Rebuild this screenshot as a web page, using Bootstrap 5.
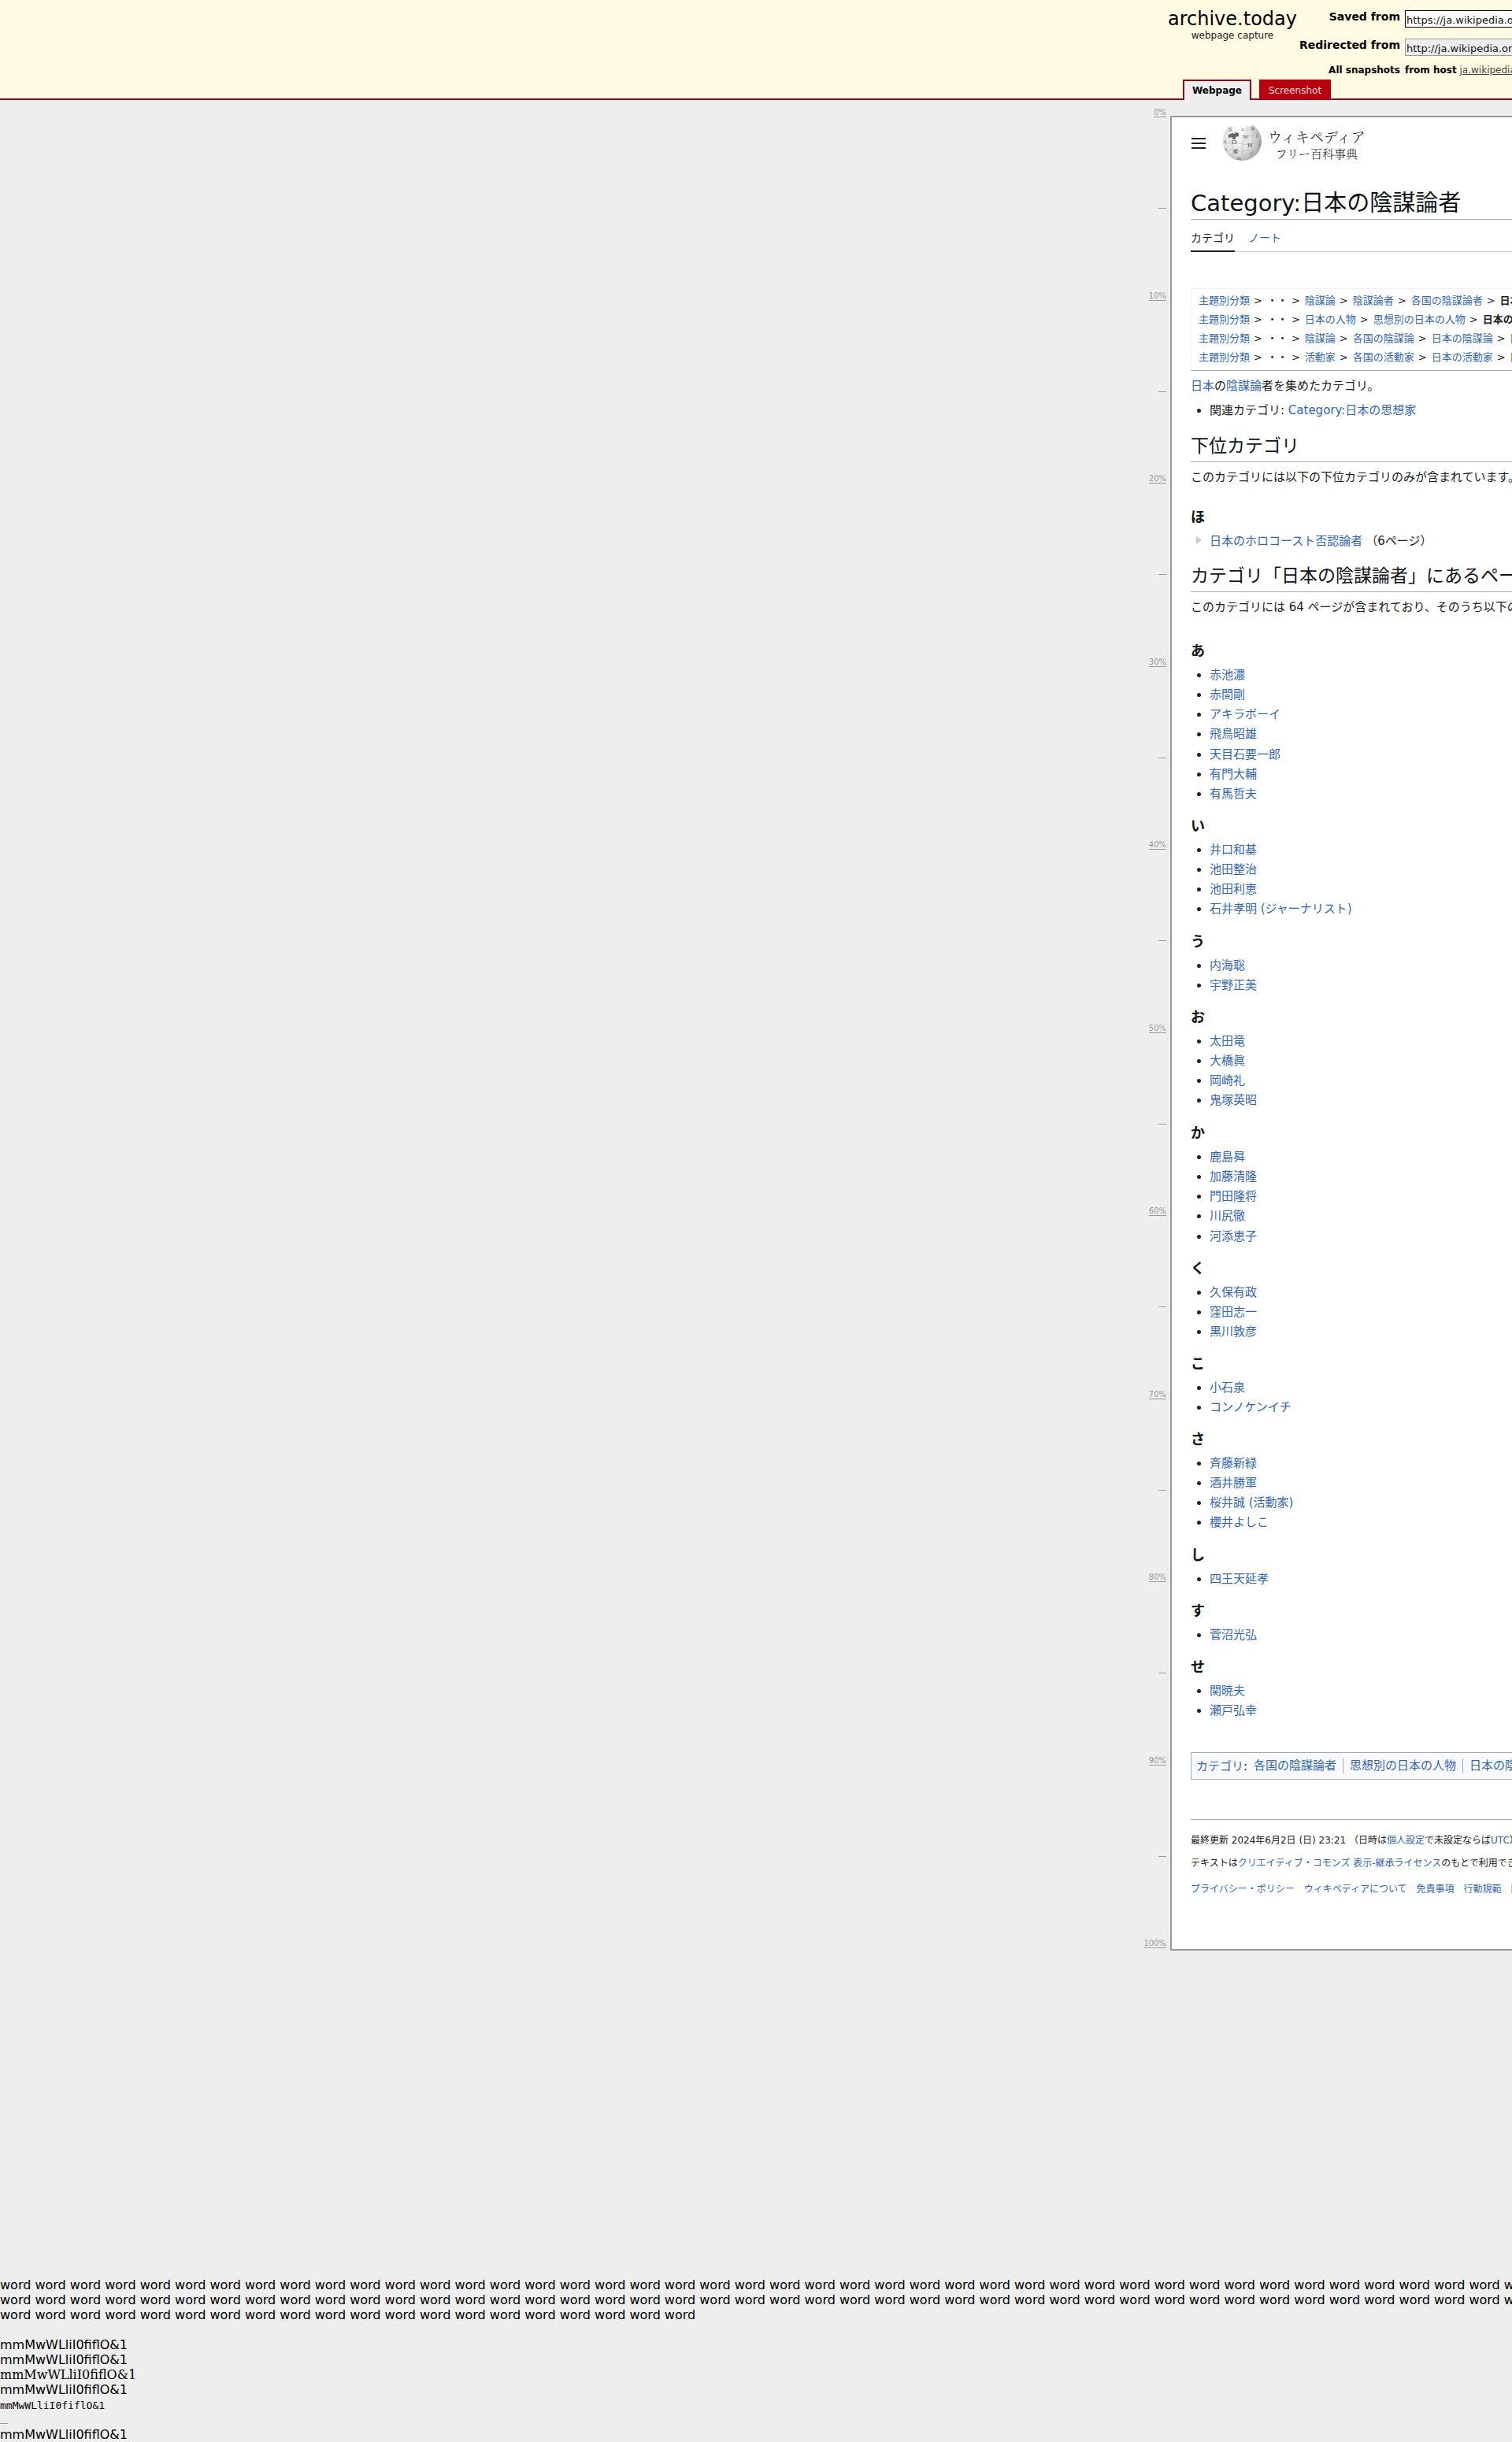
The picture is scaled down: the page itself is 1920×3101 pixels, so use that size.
<!DOCTYPE html>
<html lang="ja">
<head>
<meta charset="utf-8">
<meta name="viewport" content="width=device-width, initial-scale=1">
<title>Category:日本の陰謀論者</title>
<link href="https://cdn.jsdelivr.net/npm/bootstrap@5.3.0/dist/css/bootstrap.min.css" rel="stylesheet">
<script src="https://cdn.jsdelivr.net/npm/bootstrap@5.3.0/dist/js/bootstrap.bundle.min.js"></script>
<style>
body{background:#eee;color:#000;font:16px/19px "DejaVu Sans","Noto Sans CJK JP",sans-serif;overflow-x:hidden}
a{text-decoration:none;color:#3366b0}
.clip{overflow:hidden;white-space:nowrap}
/* archive bar */
.topbar{background:#fffae1;border-bottom:2px solid #900b1d}
.bar-inner{padding-left:calc(100% - 437px);height:101px}
.brand{flex:0 0 163px;padding-top:9px}
.brand-name{font-size:24px;line-height:30px;color:#000}
.brand-sub{font-size:12px;line-height:12px;color:#222}
.fields{padding-top:13px}
.field-row{height:36px;font-size:14px}
.field-row.short{height:32px}
.field-row.small-row{font-size:12px;line-height:16px;height:16px}
.field-label{width:131px;margin-right:6px;text-align:right;font-weight:bold;line-height:17px}
.url{width:520px;height:22px;padding:0 1px;border:1px solid #000;background:#fff;font-size:13px;line-height:20px;color:#111}
.url.muted{border-color:#999;background:#eee}
.host-link{color:#444;text-decoration:underline}
.views{margin-left:calc(100% - 418px);margin-bottom:-2px;gap:10px;font-size:12px;line-height:24px}
.view-tab{height:26px;padding:0 10px;border:2px solid #900b1d;border-bottom:0;background:#eee;color:#000;font-weight:bold}
.view-tab.other{background:#b8000f;border-color:#b8000f;color:#fdd;font-weight:normal}
/* scroll scale */
.ruler{flex:0 0 calc(100% - 439px);padding-bottom:3px;font-size:10px;line-height:10px}
.ruler-step{flex:1 1 0;display:flex;justify-content:flex-end;align-items:flex-end}
.ruler-step:first-child{flex:0 0 22px}
.ruler-step a{color:#999;border-bottom:1px solid #999}
.tick{width:10px;height:1px;background:#999}
.capture{margin:20px 0 0 5px;width:1028px;flex:none;border:2px solid #999;background:#fff;color:#202122;padding:0 24px 64px;font-size:15px;line-height:24px}
/* article */
.masthead{padding-top:8px;height:82px}
.menu-btn{border:0;background:none;padding:0;width:20px;height:50px;display:flex;align-items:center}
.logo{margin-left:20px;gap:8px;color:#111;height:50px}
.wordmark{font-family:"Noto Serif CJK JP","Noto Sans CJK JP",serif;font-weight:300;text-align:center;color:#222}
.wordmark-top{font-size:18px;line-height:24px}
.wordmark-sub{font-size:15px;line-height:19px}
.page-title{font-size:29px;line-height:39px;height:48px;margin:0;padding-top:8px;border-bottom:1px solid #a2a9b1;font-weight:normal;color:#101418}
.page-tabs{height:41px;border-bottom:1px solid #c8ccd1;font-size:14px;gap:17px;padding-top:11px}
.page-tabs a{line-height:24px;height:30px}
.page-tabs .current{color:#202122;border-bottom:2px solid #202122}
.crumbs{margin-top:46px;border:1px solid #f0f0f0;border-bottom-color:#a2a9b1;padding:3px 9px 4px;font-size:13px}
.crumbs b{font-weight:bold}
.crumbs i{font-style:normal;padding:0 6px 0 5px}
.intro{margin:7px 0}
.section-title{font-size:23px;line-height:36px;height:42px;margin:11px 0 7px;padding-top:3px;border-bottom:1px solid #a2a9b1;font-weight:normal;color:#101418}
.kana{font-size:18px;line-height:29px;margin:13px 0 4px;font-weight:bold;color:#101418}
.names{margin:0;padding-left:24px}
.names li{line-height:25px}
.names li:nth-child(4){padding-bottom:1px}
.arrow{width:7px;height:10px;margin:0 10px 2px 7px}
.groups{padding-top:11px}
.groups.pages{padding-top:16px}
.cats{margin-top:40px;height:35px;border:1px solid #a2a9b1;background:#f8f9fa;padding:0 6px}
.cats ul{margin:0 0 0 8px;padding:0;list-style:none;display:flex}
.cats li{line-height:19px;padding:0 8px;border-left:1px solid #a2a9b1}
.cats li:first-child{border:0;padding-left:0}
.foot{margin-top:50px;border-top:1px solid #a2a9b1;padding-top:14px;font-size:12px}
.foot p{margin:0 0 5px}
.foot-links{margin-top:9px;gap:12px}
/* font probes */
.probe{margin-top:415px}
.probe .serif{font-family:"DejaVu Serif",serif}
.probe .mono{font-family:"DejaVu Sans Mono",monospace;font-size:13px;height:19px;padding-top:1px}
.probe .blank-line{height:19px}
</style>
</head>
<body>
<header class="topbar">
  <div class="bar-inner d-flex clip">
    <div class="brand text-center">
      <a class="brand-name d-block" href="#">archive.today</a>
      <div class="brand-sub">webpage capture</div>
    </div>
    <form class="fields">
      <div class="field-row d-flex align-items-start"><label class="field-label" for="saved">Saved from</label><input class="url" id="saved" type="text" value="https://ja.wikipedia.org/wiki/Category:日本の陰謀論者"></div>
      <div class="field-row short d-flex align-items-start"><label class="field-label" for="redir">Redirected from</label><input class="url muted" id="redir" type="text" readonly value="http://ja.wikipedia.org/wiki/Category:日本の陰謀論者"></div>
      <div class="field-row small-row d-flex"><span class="field-label">All snapshots</span><span><b>from host</b> <a class="host-link" href="#">ja.wikipedia.org</a></span></div>
    </form>
  </div>
  <nav class="views d-flex"><a class="view-tab" href="#">Webpage</a><a class="view-tab other" href="#">Screenshot</a></nav>
</header>

<div class="d-flex clip">
  <nav class="ruler d-flex flex-column">
    <div class="ruler-step"><a href="#">0%</a></div>
    <div class="ruler-step"><span class="tick"></span></div><div class="ruler-step"><a href="#">10%</a></div>
    <div class="ruler-step"><span class="tick"></span></div><div class="ruler-step"><a href="#">20%</a></div>
    <div class="ruler-step"><span class="tick"></span></div><div class="ruler-step"><a href="#">30%</a></div>
    <div class="ruler-step"><span class="tick"></span></div><div class="ruler-step"><a href="#">40%</a></div>
    <div class="ruler-step"><span class="tick"></span></div><div class="ruler-step"><a href="#">50%</a></div>
    <div class="ruler-step"><span class="tick"></span></div><div class="ruler-step"><a href="#">60%</a></div>
    <div class="ruler-step"><span class="tick"></span></div><div class="ruler-step"><a href="#">70%</a></div>
    <div class="ruler-step"><span class="tick"></span></div><div class="ruler-step"><a href="#">80%</a></div>
    <div class="ruler-step"><span class="tick"></span></div><div class="ruler-step"><a href="#">90%</a></div>
    <div class="ruler-step"><span class="tick"></span></div><div class="ruler-step"><a href="#">100%</a></div>
  </nav>
  <main class="capture">
    <div class="masthead d-flex">
      <button class="menu-btn" type="button" aria-label="メニュー"><svg width="20" height="20" viewBox="0 0 20 20" fill="#202122"><path d="M1 3h18v2H1zM1 9h18v2H1zM1 15h18v2H1z"/></svg></button>
      <a class="logo d-flex align-items-center" href="#">
        <svg width="50" height="50" viewBox="0 0 50 50">
          <defs>
            <radialGradient id="ball" cx="38%" cy="38%" r="68%"><stop offset="0" stop-color="#f8f8f8"/><stop offset=".55" stop-color="#dedede"/><stop offset=".85" stop-color="#b4b4b4"/><stop offset="1" stop-color="#888"/></radialGradient>
            <clipPath id="round"><path d="M8 4 12 3 15 6 19 4 21 7 26 6 29 2 34 4 39 2C45 6 50 14 50 22 50 36 39 47 25 47 11 47 1 36 1 23 1 15 3 9 8 4z"/></clipPath>
          </defs>
          <g clip-path="url(#round)">
            <rect width="50" height="50" fill="url(#ball)"/>
            <path d="M15 3 13 9l5 1 3 5 6-1 3-8 2-4z" fill="#fff"/>
            <path d="M8 14l5-2 3 1 1-2 4 1v4l-4 1v3h-4v-3l-5 1z" fill="#666"/>
            <path d="M3 24c6 3 13-2 20 1s14 1 26-2M5 35c9-3 16 3 22 0s12 1 19 0M13 18c-2 8 3 13 0 24M26 14c3 8-3 15 1 31M38 7c3 9-2 17 1 33M25 15c8 3 14-2 23 1" fill="none" stroke="#bbb" stroke-width=".7"/>
            <g font-family="DejaVu Serif,serif" fill="#555" font-size="6"><text x="27" y="19">W</text><text x="12" y="26" font-size="8">Ω</text><text x="32" y="30" font-size="7">И</text><text x="14" y="37" font-family="Noto Sans CJK JP">維</text><text x="35" y="41">7</text><text x="2" y="25" font-size="5">S</text><text x="3" y="34" font-size="5">a</text><text x="43" y="17" font-size="5">J</text><text x="19" y="46" font-size="5">m</text><text x="37" y="8">a</text><text x="24" y="9">u</text><text x="8" y="10">9</text><text x="46" y="27">J</text></g>
          </g>
        </svg>
        <div class="wordmark"><div class="wordmark-top">ウィキペディア</div><div class="wordmark-sub">フリー百科事典</div></div>
      </a>
    </div>

    <h1 class="page-title">Category:日本の陰謀論者</h1>
    <nav class="page-tabs d-flex"><a class="current" href="#">カテゴリ</a><a href="#">ノート</a></nav>

    <div class="crumbs">
      <div><a href="#">主題別分類</a><i>&gt;</i>・・<i>&gt;</i><a href="#">陰謀論</a><i>&gt;</i><a href="#">陰謀論者</a><i>&gt;</i><a href="#">各国の陰謀論者</a><i>&gt;</i><b>日本の陰謀論者</b></div>
      <div><a href="#">主題別分類</a><i>&gt;</i>・・<i>&gt;</i><a href="#">日本の人物</a><i>&gt;</i><a href="#">思想別の日本の人物</a><i>&gt;</i><b>日本の陰謀論者</b></div>
      <div><a href="#">主題別分類</a><i>&gt;</i>・・<i>&gt;</i><a href="#">陰謀論</a><i>&gt;</i><a href="#">各国の陰謀論</a><i>&gt;</i><a href="#">日本の陰謀論</a><i>&gt;</i><b>日本の陰謀論者</b></div>
      <div><a href="#">主題別分類</a><i>&gt;</i>・・<i>&gt;</i><a href="#">活動家</a><i>&gt;</i><a href="#">各国の活動家</a><i>&gt;</i><a href="#">日本の活動家</a><i>&gt;</i><b>日本の陰謀論者</b></div>
    </div>
    <p class="intro"><a href="#">日本</a>の<a href="#">陰謀論</a>者を集めたカテゴリ。</p>
    <ul class="names"><li>関連カテゴリ: <a href="#">Category:日本の思想家</a></li></ul>

    <h2 class="section-title">下位カテゴリ</h2>
    <p class="m-0">このカテゴリには以下の下位カテゴリのみが含まれています。</p>
    <div class="groups">
      <h3 class="kana">ほ</h3>
      <div class="d-flex align-items-center"><svg class="arrow" viewBox="0 0 7 10"><path d="M0 0l7 5-7 5z" fill="#c8ccd1"/></svg><a href="#">日本のホロコースト否認論者</a><span class="ms-1">（6ページ）</span></div>
    </div>

    <h2 class="section-title">カテゴリ「日本の陰謀論者」にあるページ</h2>
    <p class="m-0">このカテゴリには 64 ページが含まれており、そのうち以下の 64 ページを表示しています。</p>
    <div class="groups pages">
      <h3 class="kana">あ</h3>
      <ul class="names"><li><a href="#">赤池濃</a></li><li><a href="#">赤間剛</a></li><li><a href="#">アキラボーイ</a></li><li><a href="#">飛鳥昭雄</a></li><li><a href="#">天目石要一郎</a></li><li><a href="#">有門大輔</a></li><li><a href="#">有馬哲夫</a></li></ul>
      <h3 class="kana">い</h3>
      <ul class="names"><li><a href="#">井口和基</a></li><li><a href="#">池田整治</a></li><li><a href="#">池田利恵</a></li><li><a href="#">石井孝明 (ジャーナリスト)</a></li></ul>
      <h3 class="kana">う</h3>
      <ul class="names"><li><a href="#">内海聡</a></li><li><a href="#">宇野正美</a></li></ul>
      <h3 class="kana">お</h3>
      <ul class="names"><li><a href="#">太田竜</a></li><li><a href="#">大橋眞</a></li><li><a href="#">岡崎礼</a></li><li><a href="#">鬼塚英昭</a></li></ul>
      <h3 class="kana">か</h3>
      <ul class="names"><li><a href="#">鹿島曻</a></li><li><a href="#">加藤清隆</a></li><li><a href="#">門田隆将</a></li><li><a href="#">川尻徹</a></li><li><a href="#">河添恵子</a></li></ul>
      <h3 class="kana">く</h3>
      <ul class="names"><li><a href="#">久保有政</a></li><li><a href="#">窪田志一</a></li><li><a href="#">黒川敦彦</a></li></ul>
      <h3 class="kana">こ</h3>
      <ul class="names"><li><a href="#">小石泉</a></li><li><a href="#">コンノケンイチ</a></li></ul>
      <h3 class="kana">さ</h3>
      <ul class="names"><li><a href="#">斉藤新緑</a></li><li><a href="#">酒井勝軍</a></li><li><a href="#">桜井誠 (活動家)</a></li><li><a href="#">櫻井よしこ</a></li></ul>
      <h3 class="kana">し</h3>
      <ul class="names"><li><a href="#">四王天延孝</a></li></ul>
      <h3 class="kana">す</h3>
      <ul class="names"><li><a href="#">菅沼光弘</a></li></ul>
      <h3 class="kana">せ</h3>
      <ul class="names"><li><a href="#">関暁夫</a></li><li><a href="#">瀬戸弘幸</a></li></ul>
    </div>

    <div class="cats d-flex align-items-center"><a href="#">カテゴリ</a>:<ul><li><a href="#">各国の陰謀論者</a></li><li><a href="#">思想別の日本の人物</a></li><li><a href="#">日本の陰謀論</a></li><li><a href="#">日本の活動家</a></li></ul></div>

    <footer class="foot">
      <p>最終更新 2024年6月2日 (日) 23:21 （日時は<a href="#">個人設定</a>で未設定ならば<a href="#">UTC</a>）。</p>
      <p>テキストは<a href="#">クリエイティブ・コモンズ 表示-継承ライセンス</a>のもとで利用できます。</p>
      <div class="foot-links d-flex"><a href="#">プライバシー・ポリシー</a><a href="#">ウィキペディアについて</a><a href="#">免責事項</a><a href="#">行動規範</a><a href="#">開発者</a></div>
    </footer>
  </main>
</div>

<section class="probe clip">
  <div>word word word word word word word word word word word word word word word word word word word word word word word word word word word word word word word word word word word word word word word word word word word word</div>
  <div>word word word word word word word word word word word word word word word word word word word word word word word word word word word word word word word word word word word word word word word word word word word word</div>
  <div>word word word word word word word word word word word word word word word word word word word word</div>
  <br>
  <div>mmMwWLliI0fiflO&amp;1</div>
  <div>mmMwWLliI0fiflO&amp;1</div>
  <div class="serif">mmMwWLliI0fiflO&amp;1</div>
  <div>mmMwWLliI0fiflO&amp;1</div>
  <div class="mono">mmMwWLliI0fiflO&amp;1</div>
  <div class="blank-line d-flex align-items-end pb-1"><span class="tick"></span></div>
  <div>mmMwWLliI0fiflO&amp;1</div>
</section>
</body>
</html>
